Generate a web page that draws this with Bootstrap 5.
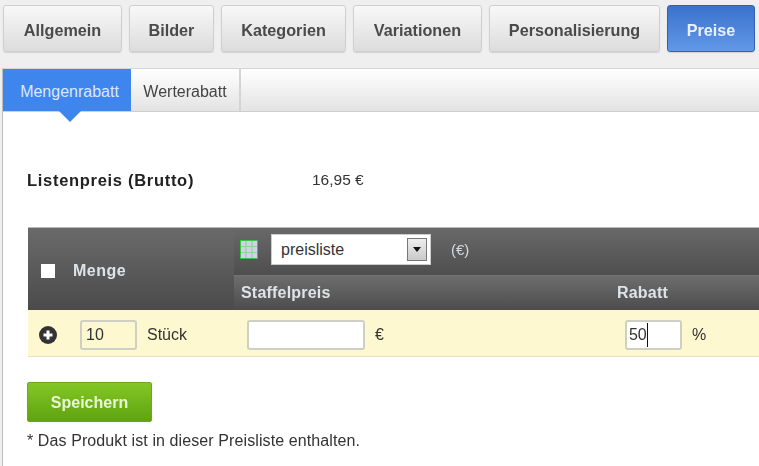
<!DOCTYPE html>
<html lang="de">
<head>
<meta charset="utf-8">
<title>Preise</title>
<link rel="stylesheet" href="https://cdn.jsdelivr.net/npm/bootstrap@5.3.0/dist/css/bootstrap.min.css">
<style>
html,body{height:100%;overflow:hidden}
body{background:#efefef;font-family:"Liberation Sans",Arial,sans-serif;color:#333;font-size:16px}
.shot{filter:blur(.55px);height:466px;display:flex;flex-direction:column}
.topbar{padding:5px 0 0 3px;height:68px;gap:7px}
.topbtn{height:47px;border:1px solid #cfcfcf;border-radius:3px;background:linear-gradient(#f8f8f8,#dcdcdc);color:#4a4a4a;font-weight:700;font-size:16.2px;padding:3px 0 0;display:flex;align-items:center;justify-content:center;box-shadow:0 1px 1px rgba(0,0,0,.12)}
.topbtn:hover{background:linear-gradient(#f8f8f8,#dcdcdc);color:#4a4a4a;border-color:#cfcfcf}
.topbtn.on,.topbtn.on:hover{background:linear-gradient(#3a72cc,#6198e8);border-color:#2f62b0;color:#e8f0ff}
.w1{width:119px}.w2{width:85px}.w3{width:125px}.w4{width:129px}.w5{width:171px}.w6{width:88px}
.sheet{flex:1;margin-left:2px;background:#fff;border-left:1px solid #bdbdbd;border-top:1px solid #d5d5d5}
.tabline{height:43px;background:linear-gradient(#fff,#e3e3e3);border-bottom:1px solid #cfcfcf}
.subtab{font-size:16px;height:42px;padding-top:3px;display:flex;align-items:center;justify-content:center;color:#444;text-decoration:none;position:relative}
.subtab.active-tab{width:128px;padding-left:5px;background:#3f85ee;color:#dbe9ff}
.subtab.active-tab::after{content:"";position:absolute;left:56px;top:42px;border:solid transparent;border-width:11px 11px 0;border-top-color:#3f85ee}
.subtab.plain{width:110px;border-right:2px solid #d4d4d4}
.body-pad{padding-left:24px}
.pricebar{height:115px;padding-top:58px}
.pricelabel{width:285px;font-weight:700;font-size:16.5px;letter-spacing:.7px;color:#222;line-height:20px}
.priceval{font-size:15.5px;line-height:20px}
.grid-box{margin-left:1px;border-top:1px solid #bbb}
.headrow{height:82px;background:linear-gradient(#6a6a6a,#4b4b4b);color:#dfe3e8;font-weight:700}
.qtyhead{width:206px;padding:3px 0 0 13px;gap:18px;font-size:16px;letter-spacing:.5px}
.chk{width:14px;height:14px;background:#fff;display:block;border:0}
.listhead{height:47px;padding:6px 0 0 6px;background:linear-gradient(#696969,#4e4e4e);font-weight:400;font-size:16px}
.colhead{height:35px;padding-left:7px;background:linear-gradient(#6d6d6d,#4c4c4c);border-top:1px solid #737373;font-size:16px;letter-spacing:.2px}
.colstaffel{width:376px}
.gridicon{margin-top:6px}
.selbox{width:160px;height:31px;background:#fff;border:1px solid #ccc;margin-left:13px;color:#333;padding:0 3px 0 9px;font-size:16px}
.selarrow{width:20px;height:23px;background:linear-gradient(#eee,#c9c9c9);border:1px solid #777;display:flex;align-items:center;justify-content:center;padding:0}
.euro{margin:5px 0 0 20px;color:#d5dae0;font-size:15px}
.datarow{height:47px;padding-top:3px;background:#fdf8cf;border-bottom:1px solid #e6e2c0;font-size:16px}
.cellqty{width:219px;padding-left:11px}
.numbox{height:30px;border:2px solid #cfcfc4;border-radius:3px;padding:0 4px;font-size:16px;color:#333;background:transparent;box-shadow:none;min-height:0}
.numbox:focus{box-shadow:none;border-color:#cfcfc4;background:transparent}
.n1{width:57px;margin-left:23px;margin-right:10px}
.n2{width:118px;background:#fff;margin-right:10px}
.n2:focus{background:#fff}
.n3{width:57px;background:#fff;margin-left:241px;margin-right:10px;padding:0 0 0 2px}
.n3:focus{background:#fff}
.caret-mark{border-right:1px solid #111}
.savebtn,.savebtn:hover{width:125px;height:40px;margin-top:25px;padding:1px 0 0;background:linear-gradient(#83c726,#5fa30f);border:1px solid #6da81c;border-radius:2px;color:#eaf8d5;font-weight:700;font-size:16px}
.hint{margin-top:9px;font-size:16px;letter-spacing:.1px;line-height:20px;color:#333}
</style>
</head>
<body>
<div class="shot">
  <div class="d-flex topbar">
    <a class="btn topbtn w1" href="#">Allgemein</a>
    <a class="btn topbtn w2" href="#">Bilder</a>
    <a class="btn topbtn w3" href="#">Kategorien</a>
    <a class="btn topbtn w4" href="#">Variationen</a>
    <a class="btn topbtn w5" href="#">Personalisierung</a>
    <a class="btn topbtn w6 on" href="#">Preise</a>
  </div>
  <div class="sheet">
    <div class="d-flex tabline">
      <a class="subtab active-tab" href="#">Mengenrabatt</a>
      <a class="subtab plain" href="#">Werterabatt</a>
    </div>
    <div class="body-pad">
      <div class="d-flex pricebar">
        <div class="pricelabel">Listenpreis (Brutto)</div>
        <div class="priceval">16,95 €</div>
      </div>
      <div class="grid-box">
        <div class="d-flex headrow">
          <div class="d-flex align-items-center qtyhead"><span class="chk"></span><span>Menge</span></div>
          <div class="flex-grow-1">
            <div class="d-flex align-items-start listhead">
              <svg width="18" height="19" viewBox="0 0 18 19" class="gridicon" aria-hidden="true"><rect x=".5" y=".5" width="17" height="18" fill="#d5cfee" stroke="#3fc04a"/><path d="M6 1v17M12 1v17M1 6.5h16M1 12.5h16" stroke="#8fd49a" stroke-width="1.2"/></svg>
              <div class="d-flex align-items-center justify-content-between selbox"><span>preisliste</span><button class="selarrow" type="button" aria-label="Auswahl"><svg width="8" height="5" viewBox="0 0 8 5" aria-hidden="true"><path d="M0 0h8L4 5z" fill="#111"/></svg></button></div>
              <span class="euro">(€)</span>
            </div>
            <div class="d-flex align-items-center colhead"><span class="colstaffel">Staffelpreis</span><span>Rabatt</span></div>
          </div>
        </div>
        <div class="d-flex align-items-center datarow">
          <div class="d-flex align-items-center cellqty">
            <svg width="18" height="18" viewBox="0 0 18 18" aria-hidden="true"><circle cx="9" cy="9" r="9" fill="#333"/><path d="M9 4.5v9M4.5 9h9" stroke="#fff" stroke-width="3"/></svg>
            <input class="form-control numbox n1" type="text" value="10" aria-label="Menge">
            <span>Stück</span>
          </div>
          <input class="form-control numbox n2" type="text" aria-label="Staffelpreis">
          <span>€</span>
          <div class="form-control numbox n3 d-flex align-items-center"><span class="caret-mark">50</span></div>
          <span>%</span>
        </div>
      </div>
      <button class="btn savebtn d-block" type="button">Speichern</button>
      <p class="hint mb-0">* Das Produkt ist in dieser Preisliste enthalten.</p>
    </div>
  </div>
</div>
<script src="https://cdn.jsdelivr.net/npm/bootstrap@5.3.0/dist/js/bootstrap.bundle.min.js"></script>
</body>
</html>
